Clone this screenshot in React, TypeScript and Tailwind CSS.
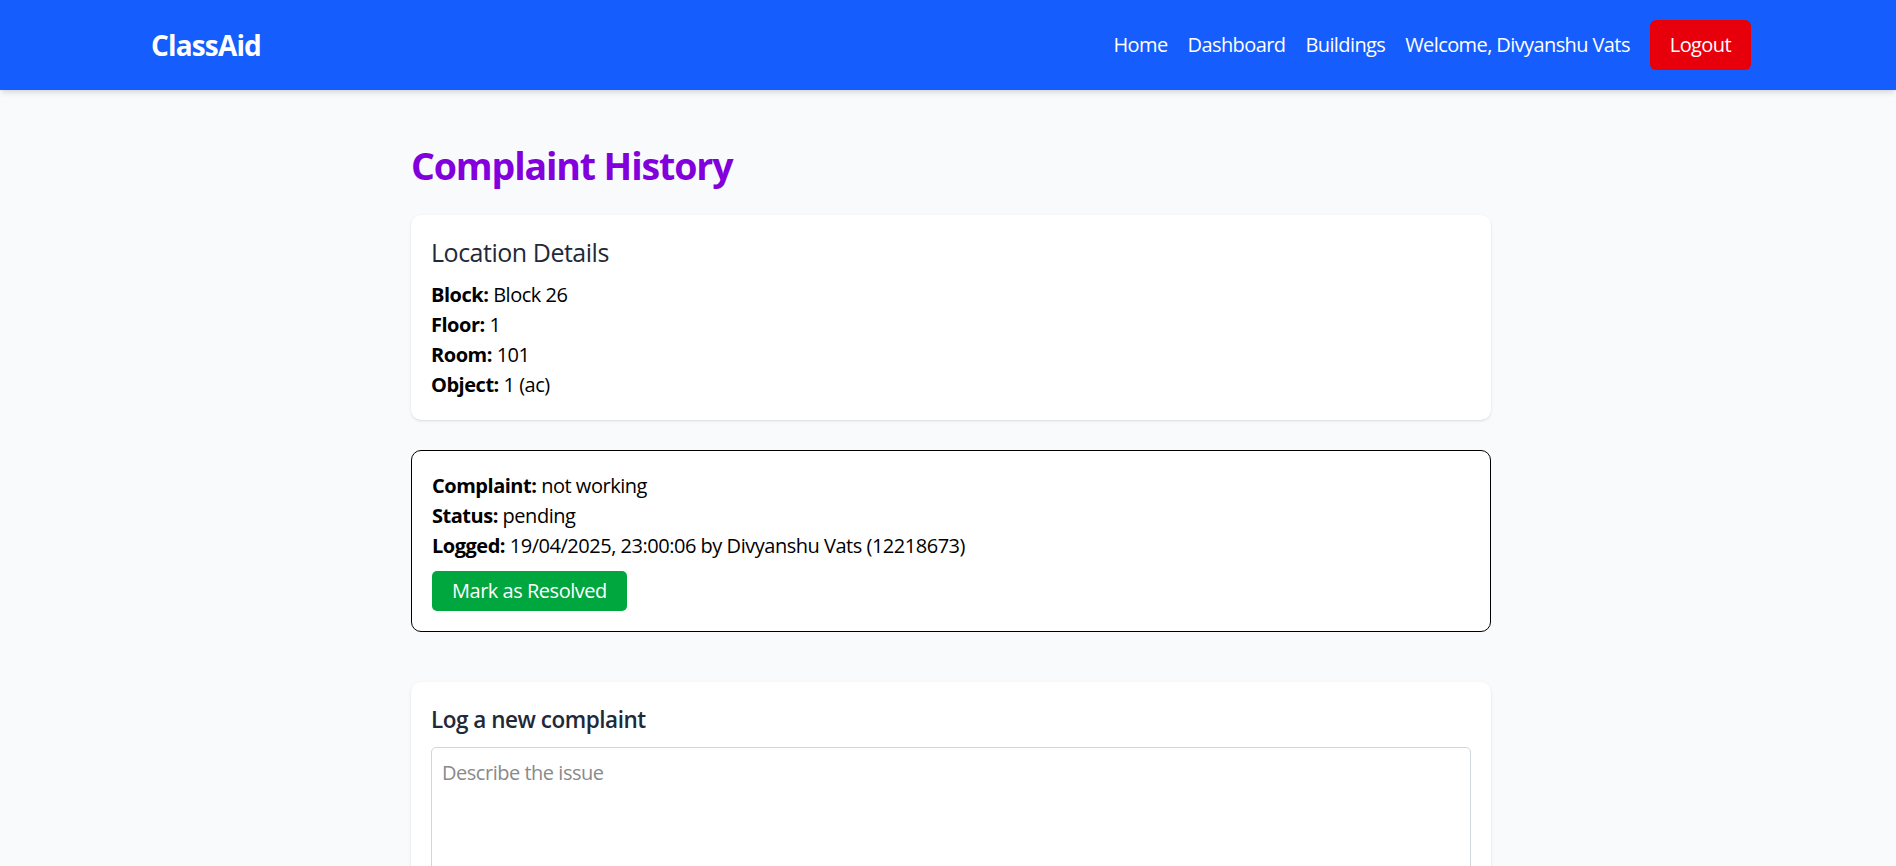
import React from "react";

const details = [
  { label: "Block:", value: "Block 26" },
  { label: "Floor:", value: "1" },
  { label: "Room:", value: "101" },
  { label: "Object:", value: "1 (ac)" },
];

const App = () => {
  return (
    <div className="min-h-screen bg-[#f9fafb] font-['Open_Sans',sans-serif] text-[20px] leading-[30px] tracking-[-0.024em] text-black">
      <header className="bg-[#155dfc] shadow-md">
        <div className="pl-[6px]">
          <div className="mx-auto flex w-[1600px] items-center justify-between py-5">
            <span className="text-[28px] font-bold leading-[40px] tracking-[-0.03em] text-white">ClassAid</span>
            <nav className="flex items-center gap-5 tracking-[-0.03em] text-white">
              <a href="#">Home</a>
              <a href="#">Dashboard</a>
              <a href="#">Buildings</a>
              <span>Welcome, Divyanshu Vats</span>
              <button className="rounded-[6px] bg-[#e7000b] px-5 py-[10px] text-white">Logout</button>
            </nav>
          </div>
        </div>
      </header>

      <main className="pl-[6px]">
        <div className="mx-auto w-[1080px] pt-[53px]">
          <h1 className="mb-[27px] text-[37.5px] font-bold leading-[45px] tracking-[-0.03em] text-[#8200db]">Complaint History</h1>

          <div className="rounded-[10px] bg-white p-5 shadow-sm">
            <h3 className="mb-[10px] text-[25px] leading-[35px] text-[#1e2939]">Location Details</h3>
            {details.map((d) => (
              <p key={d.label}>
                <strong className="font-bold">{d.label}</strong> {d.value}
              </p>
            ))}
          </div>

          <div className="mt-[30px] rounded-[10px] border border-black bg-white p-5">
            <p>
              <strong className="font-bold">Complaint:</strong> not working
            </p>
            <p>
              <strong className="font-bold">Status:</strong> pending
            </p>
            <p>
              <strong className="font-bold">Logged:</strong> 19/04/2025, 23:00:06 by Divyanshu Vats (12218673)
            </p>
            <button className="mt-[10px] rounded-[5px] bg-[#00a63e] px-5 py-[5px] text-white">Mark as Resolved</button>
          </div>

          <div className="mt-[50px] rounded-[10px] bg-white p-5 shadow-sm">
            <h2 className="mb-[10px] text-[22.5px] font-semibold leading-[35px] text-[#1e2939]">Log a new complaint</h2>
            <textarea
              rows={4}
              placeholder="Describe the issue"
              className="block w-full resize-y rounded-[5px] border border-[#d1d5dc] p-[10px] tracking-[-0.024em] placeholder:text-[#8a8a8a]"
            />
          </div>
        </div>
      </main>
    </div>
  );
};

export default App;
